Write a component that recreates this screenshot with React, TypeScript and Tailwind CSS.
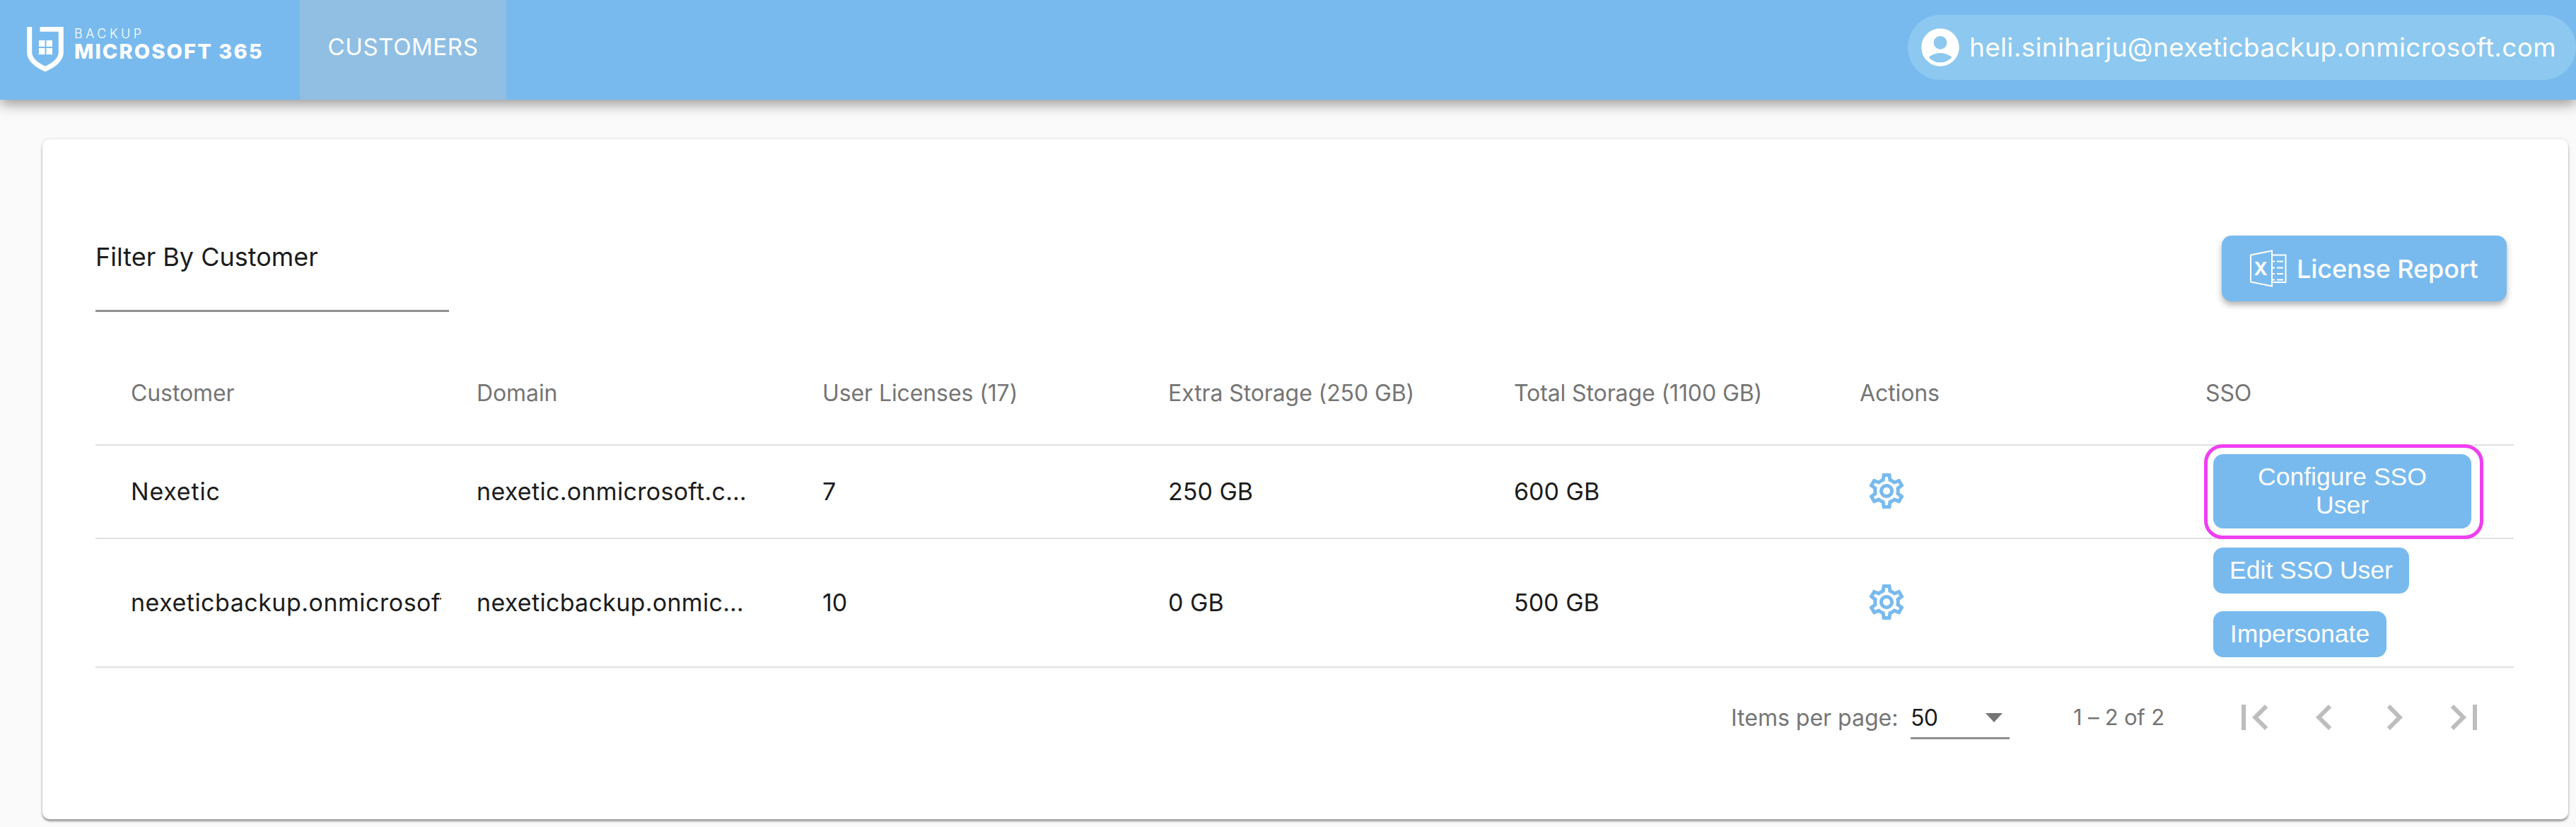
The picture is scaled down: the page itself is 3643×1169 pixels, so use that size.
import React from "react";
import { MdAccountCircle, MdOutlineSettings, MdFirstPage, MdLastPage, MdChevronLeft, MdChevronRight } from "react-icons/md";

function Shield() {
  return (
    <svg width="52" height="63" viewBox="0 0 52 63" fill="none" className="shrink-0">
      <path d="M3.7 0V36C3.7 47 14 54 26 59.5C38 54 48.300 47 48.300 36V3.300H18.500" stroke="#fff" strokeWidth="7" />
      <rect x="17" y="19" width="8.5" height="9" fill="#fff" />
      <rect x="27.5" y="19" width="8.5" height="9" fill="#fff" />
      <rect x="17" y="30" width="8.5" height="9" fill="#fff" />
      <rect x="27.5" y="30" width="8.5" height="9" fill="#fff" />
    </svg>
  );
}

function ExcelIcon() {
  return (
    <svg width="52" height="53" viewBox="0 0 52 53" fill="none" stroke="#fff" strokeWidth="2" className="shrink-0">
      <path d="M1 7.5L31 1.5V51.5L1 45.5Z" />
      <path d="M31 7.5H50.5V46H31" />
      <path d="M31 16.5H35M38 16.5H47M31 25.5H35M38 25.5H47M31 34H35M38 34H47M31 42.500H35M38 42.500H47" />
      <text x="15" y="36" textAnchor="middle" fontSize="26" fontWeight="700" fill="#fff" stroke="none" fontFamily="Inter, sans-serif">X</text>
    </svg>
  );
}

const rows = [
  { customer: "Nexetic", domain: "nexetic.onmicrosoft.com", users: "7", extra: "250 GB", total: "600 GB" },
  { customer: "nexeticbackup.onmicrosoft.com", domain: "nexeticbackup.onmicrosoft.com", users: "10", extra: "0 GB", total: "500 GB" },
];

const headers = ["Customer", "Domain", "User Licenses (17)", "Extra Storage (250 GB)", "Total Storage (1100 GB)", "Actions", "SSO"];

const ssoButton = "flex items-center justify-center rounded-[14px] bg-[#78baee] text-white text-center font-['Liberation_Sans',Arial,sans-serif] text-[35.5px] leading-[40px]";

export default function App() {
  return (
    <div className="h-[1169px] w-[3643px] overflow-hidden bg-[#fafafa] font-['Inter',sans-serif]">
      <header className="relative z-10 flex h-[141px] items-stretch bg-[#78baee] shadow-[0_6px_18px_rgba(0,0,0,0.4)] text-white">
        <div className="flex w-[424px] items-start pl-[38px] pt-[38px]">
          <Shield />
          <div className="ml-[15px] flex flex-col">
            <span className="mt-[1px] text-[18px] leading-[18px] font-light tracking-[4.5px]">BACKUP</span>
            <span className="mt-[3px] text-[29px] leading-[26px] font-extrabold tracking-[2.1px] whitespace-nowrap">MICROSOFT 365</span>
          </div>
        </div>
        <div className="flex w-[292px] items-center justify-center bg-[#90bfe3] pb-[7px] text-[33px] tracking-[0.6px]">CUSTOMERS</div>
        <div className="ml-auto mt-[21px] flex h-[92px] w-[945px] items-center rounded-l-[46px] rounded-r-[46px] bg-[#8cc8ef] pl-[14px]">
          <MdAccountCircle className="shrink-0 text-[64px] text-white" />
          <span className="ml-[9px] text-[37px] tracking-[0.32px] whitespace-nowrap">heli.siniharju@nexeticbackup.onmicrosoft.com</span>
        </div>
      </header>

      <main className="ml-[60px] mr-[11px] mt-[56px] h-[961px] rounded-[10px] bg-white pl-[75px] pr-[77px] pt-[136px] shadow-[0_3px_3px_rgba(0,0,0,0.35),0_0_5px_rgba(0,0,0,0.12)]">
        <div className="mr-[10px] flex h-[108px] items-start justify-between">
          <div className="h-[108px] w-[500px] border-b-[3px] border-[#8f8f8f]">
            <div className="pt-[8px] text-[36px] leading-[44px] text-[#1c1c1c]">Filter By Customer</div>
          </div>
          <button className="flex h-[93px] w-[403px] items-center rounded-[14px] bg-[#78baee] pl-[40px] text-[36px] font-medium tracking-[-0.1px] text-white shadow-[0_5px_8px_rgba(0,0,0,0.3)]">
            <ExcelIcon />
            <span className="ml-[14px]">License Report</span>
          </button>
        </div>

        <div className="mt-[43px]">
          <div className="grid h-[146px] grid-cols-[repeat(7,489px)] items-center border-b-[2px] border-[#e0e0e0] text-[#757575]">
            {headers.map((h) => (
              <div key={h} className="pl-[50px] pb-[1px] text-[32px] tracking-[-0.1px] whitespace-nowrap">{h}</div>
            ))}
          </div>

          {rows.map((r, i) => (
            <div key={r.customer} className={`grid grid-cols-[repeat(7,489px)] items-center border-b-[2px] border-[#e0e0e0] pb-[2px] text-[34px] text-[#1c1c1c] ${i === 0 ? "h-[132px]" : "h-[182px]"}`}>
              <div className={`overflow-hidden pl-[50px] whitespace-nowrap ${i === 0 ? "tracking-[0.8px]" : "tracking-[0.5px]"}`}>{r.customer}</div>
              <div className="overflow-hidden pl-[50px] pr-[50px] text-ellipsis whitespace-nowrap tracking-[0.3px]">{r.domain}</div>
              <div className="pl-[50px]">{r.users}</div>
              <div className="pl-[50px]">{r.extra}</div>
              <div className="pl-[50px]">{r.total}</div>
              <div className="pl-[50px]">
                <MdOutlineSettings className="ml-[8px] text-[60px] text-[#78baee]" />
              </div>
              <div className="pl-[61px]">
                {i === 0 ? (
                  <div className="relative w-[365px]">
                    <span className="absolute -bottom-[15px] -left-[13px] -right-[17px] -top-[14px] rounded-[26px] border-[5px] border-[#ee3ff0]" />
                    <div className={`${ssoButton} relative h-[105px] w-[365px]`}>Configure SSO<br />User</div>
                  </div>
                ) : (
                  <div className="flex flex-col items-start gap-[25px]">
                    <div className={`${ssoButton} h-[65px] w-[277px]`}>Edit SSO User</div>
                    <div className={`${ssoButton} h-[65px] w-[245px]`}>Impersonate</div>
                  </div>
                )}
              </div>
            </div>
          ))}
        </div>

        <div className="mt-[44px] flex h-[70px] items-start pl-[2313px] text-[#757575]">
          <span className="mt-[3px] w-[254px] whitespace-nowrap text-[32px]">Items per page:</span>
          <div className="flex h-[57px] w-[140px] items-start justify-between border-b-[3px] border-[#8f8f8f]">
            <span className="mt-[3px] text-[32px] tracking-[-0.8px] text-[#1c1c1c]">50</span>
            <span className="mr-[10px] mt-[20px] h-0 w-0 border-x-[12px] border-t-[13px] border-x-transparent border-t-[#757575]" />
          </div>
          <span className="ml-[90px] mt-[3px] w-[238px] whitespace-nowrap text-[31px] tracking-[-0.2px]">1 – 2 of 2</span>
          <div className="-mt-[10px] flex text-[#bdbdbd]">
            <MdFirstPage className="-ml-[18px] text-[72px]" />
            <MdChevronLeft className="ml-[27px] text-[72px]" />
            <MdChevronRight className="ml-[27px] text-[72px]" />
            <MdLastPage className="ml-[27px] text-[72px]" />
          </div>
        </div>
      </main>
    </div>
  );
}
